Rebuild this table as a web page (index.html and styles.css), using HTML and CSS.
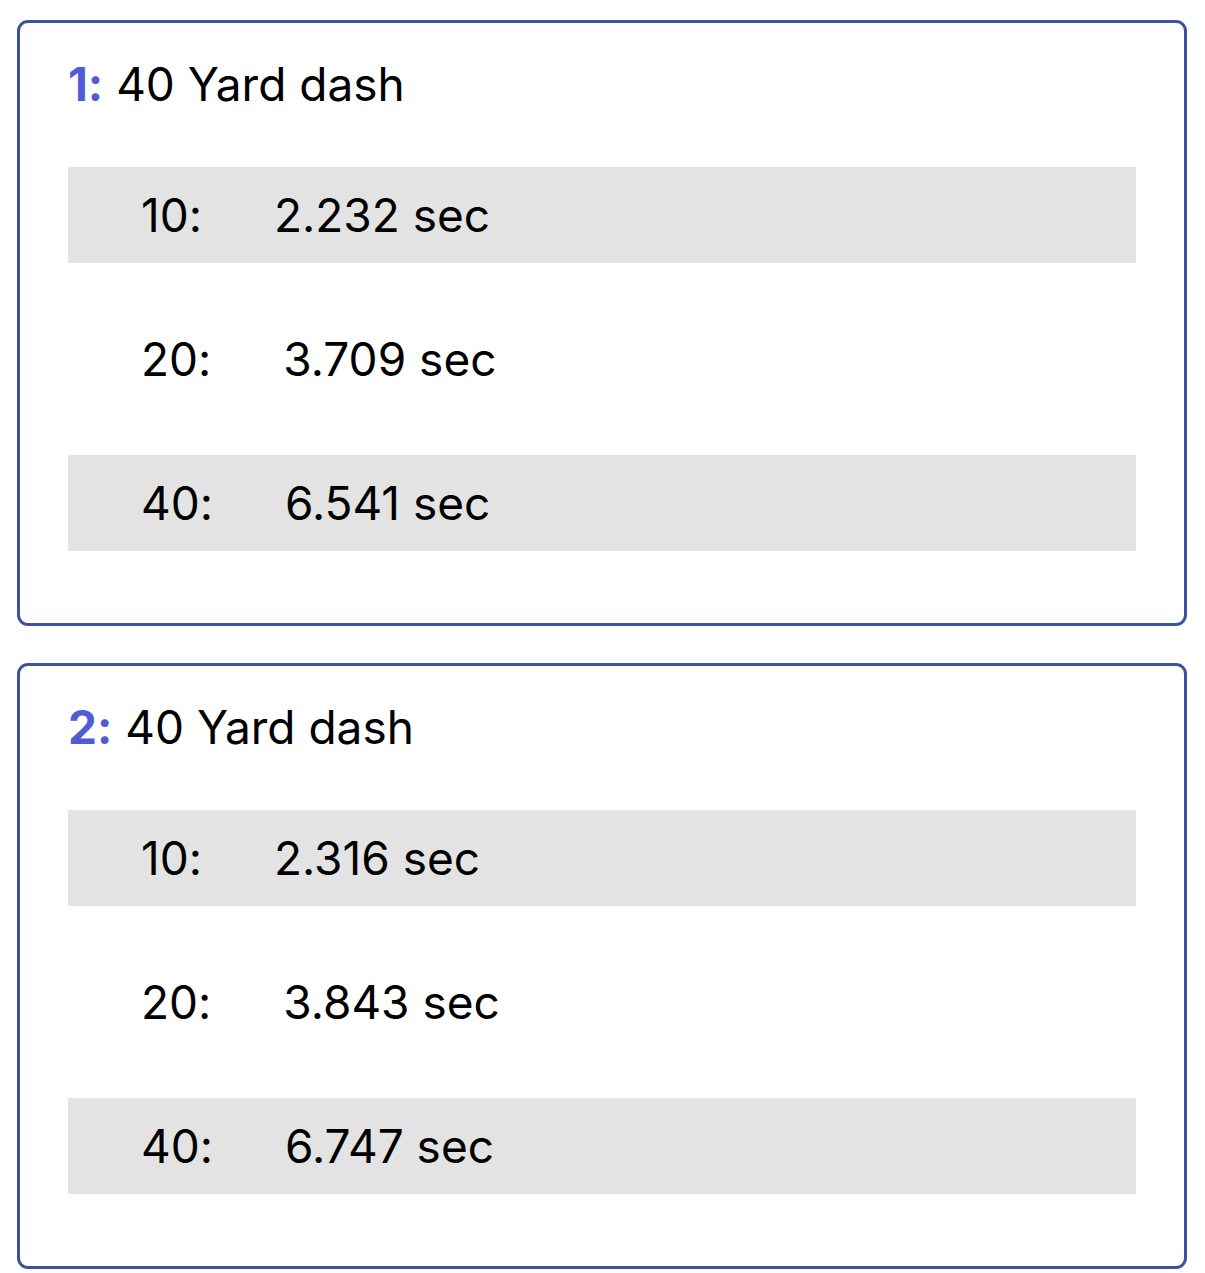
FILE: index.html
```html
<!DOCTYPE html>
<html lang="en">
<head>
<meta charset="utf-8">
<title>40 Yard dash</title>
<link rel="stylesheet" href="styles.css">
</head>
<body>
<main class="list">
  <section class="card">
    <h2 class="title"><span class="num">1:</span> 40 Yard dash</h2>
    <div class="splits">
      <div class="split shaded"><span class="dist">10:</span><span class="time">2.232 sec</span></div>
      <div class="split"><span class="dist">20:</span><span class="time">3.709 sec</span></div>
      <div class="split shaded"><span class="dist">40:</span><span class="time">6.541 sec</span></div>
    </div>
  </section>
  <section class="card">
    <h2 class="title"><span class="num">2:</span> 40 Yard dash</h2>
    <div class="splits">
      <div class="split shaded"><span class="dist">10:</span><span class="time">2.316 sec</span></div>
      <div class="split"><span class="dist">20:</span><span class="time">3.843 sec</span></div>
      <div class="split shaded"><span class="dist">40:</span><span class="time">6.747 sec</span></div>
    </div>
  </section>
</main>
</body>
</html>
```
FILE: styles.css
```css
* { box-sizing: border-box; }

html, body {
  margin: 0;
  background: #ffffff;
}

body {
  font-family: Inter, "Liberation Sans", Arial, sans-serif;
  font-feature-settings: "calt" 0;
  color: #000;
  padding: 20px 18px 0 17px;
}

.list {
  display: flex;
  flex-direction: column;
  gap: 37px;
}

.card {
  border: 3px solid #3d529c;
  border-radius: 11px;
  padding: 33px 48px 72px 48px;
}

.title {
  margin: 0;
  font-size: 46px;
  line-height: 56px;
  font-weight: 400;
}

.num {
  color: #4f5cd6;
  font-weight: 700;
}

.splits {
  margin-top: 55px;
  display: flex;
  flex-direction: column;
  gap: 48px;
}

.split {
  height: 96px;
  display: flex;
  align-items: center;
  gap: 72px;
  padding-left: 73px;
  font-size: 46px;
}

.split.shaded {
  background: #e4e3e4;
}
```
